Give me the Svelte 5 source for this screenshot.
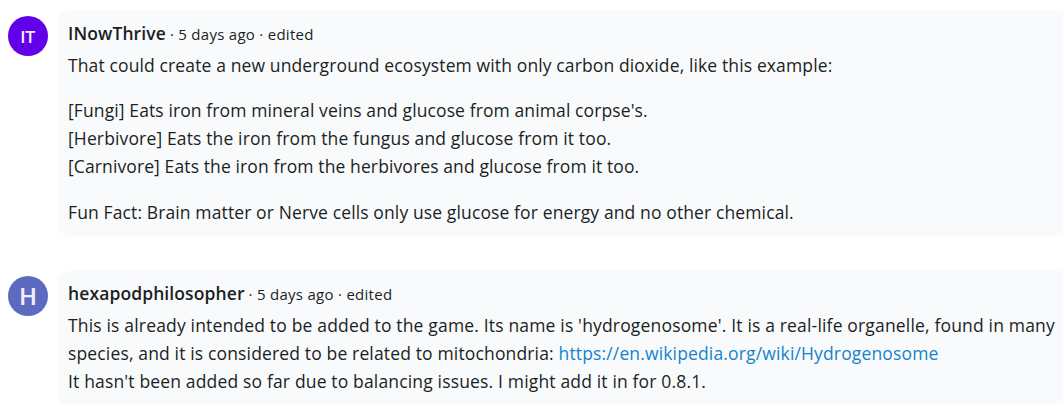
<script>
    const comments = [
        {
            author: "INowThrive",
            initials: "IT",
            color: "#6200ea",
            size: 17,
            time: "5 days ago",
            paragraphs: [
                [{ text: "That could create a new underground ecosystem with only carbon dioxide, like this example:", spacing: 0.125 }],
                [
                    { text: "[Fungi] Eats iron from mineral veins and glucose from animal corpse's.", spacing: 0.11 },
                    { text: "[Herbivore] Eats the iron from the fungus and glucose from it too.", spacing: 0.14 },
                    { text: "[Carnivore] Eats the iron from the herbivores and glucose from it too.", spacing: 0.11 },
                ],
                [{ text: "Fun Fact: Brain matter or Nerve cells only use glucose for energy and no other chemical.", spacing: 0.12 }],
            ],
        },
        {
            author: "hexapodphilosopher",
            initials: "H",
            color: "#5c6bc0",
            size: 24,
            time: "5 days ago",
            paragraphs: [
                [
                    { text: "This is already intended to be added to the game. Its name is 'hydrogenosome'. It is a real-life organelle, found in many", spacing: 0.17 },
                    {
                        text: "species, and it is considered to be related to mitochondria: ",
                        link: "https://en.wikipedia.org/wiki/Hydrogenosome",
                        spacing: 0.15,
                    },
                    { text: "It hasn't been added so far due to balancing issues. I might add it in for 0.8.1.", spacing: 0.16 },
                ],
            ],
        },
    ];
</script>

<div class="comments">
    {#each comments as comment}
        <article class="comment">
            <div class="avatar" style="background-color: {comment.color}; font-size: {comment.size}px">{comment.initials}</div>
            <div class="bubble">
                <header class="meta">
                    <span class="author">{comment.author}</span>
                    <span class="info">· {comment.time} · edited</span>
                </header>
                {#each comment.paragraphs as lines}
                    <p>
                        {#each lines as line}
                            <span class="line" style="letter-spacing: {line.spacing}px">{line.text}{#if line.link}<a href={line.link}>{line.link}</a>{/if}</span>
                        {/each}
                    </p>
                {/each}
            </div>
        </article>
    {/each}
</div>

<style>
    :global(body) {
        background: #ffffff;
        overflow: hidden;
    }
    .comments {
        display: flex;
        flex-direction: column;
        gap: 35px;
        padding: 11px 0 0 8px;
        color: #1b1f23;
        font-family: "Open Sans", sans-serif;
        font-size: 17.5px;
        line-height: 28px;
    }
    .comment {
        display: flex;
        gap: 10px;
    }
    .avatar {
        display: flex;
        flex: none;
        box-sizing: border-box;
        align-items: center;
        justify-content: center;
        width: 40px;
        height: 40px;
        margin-top: 5px;
        padding-top: 2px;
        border-radius: 50%;
        color: #f3edfd;
        font-family: Roboto, sans-serif;
        font-weight: 500;
    }
    .bubble {
        flex: 1;
        min-width: 0;
        padding: 8px 0 10px 10px;
        border-radius: 10px 0 0 10px;
        background-color: #f9fafc;
    }
    .meta {
        display: flex;
        align-items: baseline;
        gap: 4px;
        height: 32px;
        white-space: nowrap;
    }
    .author {
        font-weight: 600;
        letter-spacing: 0.1px;
    }
    .info {
        font-size: 15px;
        letter-spacing: 0.28px;
    }
    p {
        margin: 0 0 17.4px;
    }
    p:last-child {
        margin-bottom: 0;
    }
    .line {
        display: block;
        white-space: pre;
    }
    a {
        color: #1583cc;
        text-decoration: none;
    }
</style>
